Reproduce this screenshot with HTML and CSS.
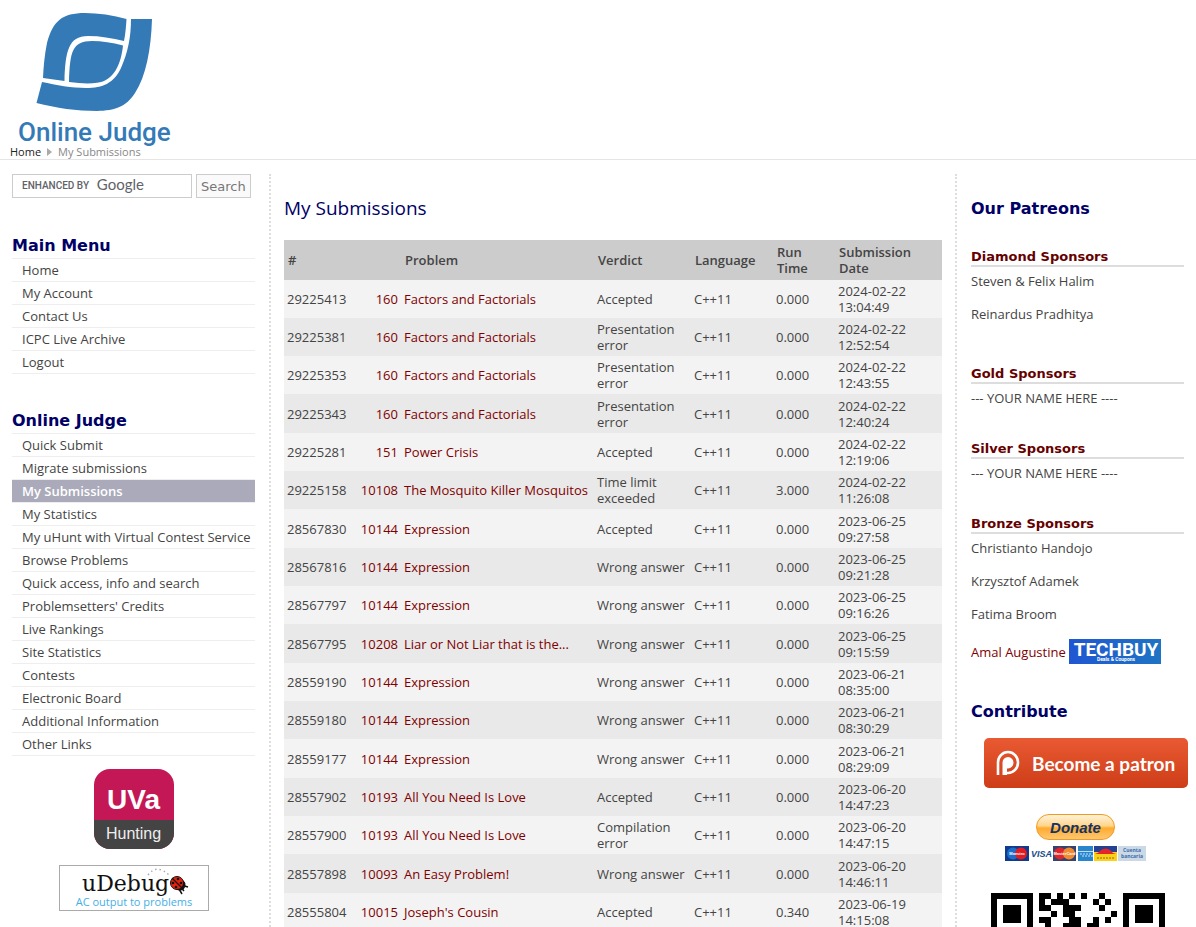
FILE: index.html
```
<!DOCTYPE html>
<html lang="en">
<head>
<meta charset="utf-8">
<title>Online Judge - My Submissions</title>
<link rel="stylesheet" href="styles.css">
</head>
<body>
<header class="header">
  <a class="logo" href="#" aria-label="Online Judge">
    <svg width="180" height="145" viewBox="0 0 180 145" fill="#337ab7">
      <path d="M126.500 19C113 15 98 13 85 13C62 13 53 21 47 43C44.500 55 43.500 67 43 78L64.500 81C65.500 52 68 36 88 36C100 36 112 38 124 41C125.500 34 126 26 126.500 19Z"/>
      <path d="M123 45.500C112 42.500 102 41 92 41C72 41 70 52 69 82C80 83.500 90 83.800 97 82.800C114 81 121 64 123 45.500Z"/>
      <path d="M131 19H152C151 50 146 76 135 93C126 107 115 110.500 97 111C77 111 56 108 36.500 103L42 82C56 85 72 88 86 88C103 88 114 83 121 68C128 52 131 37 131 19Z"/>
      <text class="logo-text" x="18" y="141">Online Judge</text>
    </svg>
  </a>
  <nav class="crumbs"><a href="#">Home</a><svg width="5" height="8" viewBox="0 0 5 8"><path d="M0 0L5 4L0 8Z" fill="#aaa"/></svg><span>My Submissions</span></nav>
</header>

<div class="page">
  <aside class="left">
    <form class="search">
      <div class="search-box">
        <input type="text" aria-label="Search">
        <span class="brand"><small>ENHANCED BY</small> Google</span>
      </div>
      <button type="button">Search</button>
    </form>
    <h2>Main Menu</h2>
    <ul class="menu">
      <li><a href="#">Home</a></li>
      <li><a href="#">My Account</a></li>
      <li><a href="#">Contact Us</a></li>
      <li><a href="#">ICPC Live Archive</a></li>
      <li><a href="#">Logout</a></li>
    </ul>
    <h2>Online Judge</h2>
    <ul class="menu">
      <li><a href="#">Quick Submit</a></li>
      <li><a href="#">Migrate submissions</a></li>
      <li><a class="active" href="#">My Submissions</a></li>
      <li><a href="#">My Statistics</a></li>
      <li><a href="#">My uHunt with Virtual Contest Service</a></li>
      <li><a href="#">Browse Problems</a></li>
      <li><a href="#">Quick access, info and search</a></li>
      <li><a href="#">Problemsetters' Credits</a></li>
      <li><a href="#">Live Rankings</a></li>
      <li><a href="#">Site Statistics</a></li>
      <li><a href="#">Contests</a></li>
      <li><a href="#">Electronic Board</a></li>
      <li><a href="#">Additional Information</a></li>
      <li><a href="#">Other Links</a></li>
    </ul>
    <div class="badges">
      <a class="uva" href="#"><b>UVa</b><span>Hunting</span></a>
      <a class="udebug" href="#" aria-label="uDebug, AC output to problems">
        <svg width="148" height="44" viewBox="0 0 148 44">
          <path d="M88 9Q97 -3 110 10" fill="none" stroke="#aaa" stroke-width="1.500" stroke-dasharray="1.500 3"/>
          <text class="udebug-name" x="22" y="25">uDebug</text>
          <path d="M114 13L124 25M125 17L121 19L128 21M119 23L122 28" stroke="#111" stroke-width="1.500" fill="none"/>
          <circle cx="120" cy="19" r="5.500" fill="#111"/>
          <circle cx="117" cy="17" r="6.500" fill="#e8200c" stroke="#111"/>
          <path d="M112 12L123 23" stroke="#111" stroke-width="1.200"/>
          <g fill="#111"><circle cx="118" cy="13" r="1.300"/><circle cx="121" cy="17" r="1.300"/><circle cx="113" cy="17" r="1.300"/><circle cx="116" cy="21" r="1.300"/></g>
          <text class="udebug-note" x="74" y="40" text-anchor="middle">AC output to problems</text>
        </svg>
      </a>
    </div>
  </aside>

  <main class="main">
    <h1>My Submissions</h1>
    <table>
      <colgroup><col class="c-id"><col class="c-num"><col class="c-title"><col class="c-verdict"><col class="c-lang"><col class="c-time"><col class="c-date"></colgroup>
      <thead><tr><th>#</th><th></th><th>Problem</th><th>Verdict</th><th>Language</th><th>Run Time</th><th>Submission Date</th></tr></thead>
      <tbody>
        <tr><td>29225413</td><td><a href="#">160</a></td><td><a href="#">Factors and Factorials</a></td><td>Accepted</td><td>C++11</td><td>0.000</td><td>2024-02-22 13:04:49</td></tr>
        <tr><td>29225381</td><td><a href="#">160</a></td><td><a href="#">Factors and Factorials</a></td><td>Presentation error</td><td>C++11</td><td>0.000</td><td>2024-02-22 12:52:54</td></tr>
        <tr><td>29225353</td><td><a href="#">160</a></td><td><a href="#">Factors and Factorials</a></td><td>Presentation error</td><td>C++11</td><td>0.000</td><td>2024-02-22 12:43:55</td></tr>
        <tr><td>29225343</td><td><a href="#">160</a></td><td><a href="#">Factors and Factorials</a></td><td>Presentation error</td><td>C++11</td><td>0.000</td><td>2024-02-22 12:40:24</td></tr>
        <tr><td>29225281</td><td><a href="#">151</a></td><td><a href="#">Power Crisis</a></td><td>Accepted</td><td>C++11</td><td>0.000</td><td>2024-02-22 12:19:06</td></tr>
        <tr><td>29225158</td><td><a href="#">10108</a></td><td><a href="#">The Mosquito Killer Mosquitos</a></td><td>Time limit exceeded</td><td>C++11</td><td>3.000</td><td>2024-02-22 11:26:08</td></tr>
        <tr><td>28567830</td><td><a href="#">10144</a></td><td><a href="#">Expression</a></td><td>Accepted</td><td>C++11</td><td>0.000</td><td>2023-06-25 09:27:58</td></tr>
        <tr><td>28567816</td><td><a href="#">10144</a></td><td><a href="#">Expression</a></td><td>Wrong answer</td><td>C++11</td><td>0.000</td><td>2023-06-25 09:21:28</td></tr>
        <tr><td>28567797</td><td><a href="#">10144</a></td><td><a href="#">Expression</a></td><td>Wrong answer</td><td>C++11</td><td>0.000</td><td>2023-06-25 09:16:26</td></tr>
        <tr><td>28567795</td><td><a href="#">10208</a></td><td><a href="#">Liar or Not Liar that is the...</a></td><td>Wrong answer</td><td>C++11</td><td>0.000</td><td>2023-06-25 09:15:59</td></tr>
        <tr><td>28559190</td><td><a href="#">10144</a></td><td><a href="#">Expression</a></td><td>Wrong answer</td><td>C++11</td><td>0.000</td><td>2023-06-21 08:35:00</td></tr>
        <tr><td>28559180</td><td><a href="#">10144</a></td><td><a href="#">Expression</a></td><td>Wrong answer</td><td>C++11</td><td>0.000</td><td>2023-06-21 08:30:29</td></tr>
        <tr><td>28559177</td><td><a href="#">10144</a></td><td><a href="#">Expression</a></td><td>Wrong answer</td><td>C++11</td><td>0.000</td><td>2023-06-21 08:29:09</td></tr>
        <tr><td>28557902</td><td><a href="#">10193</a></td><td><a href="#">All You Need Is Love</a></td><td>Accepted</td><td>C++11</td><td>0.000</td><td>2023-06-20 14:47:23</td></tr>
        <tr><td>28557900</td><td><a href="#">10193</a></td><td><a href="#">All You Need Is Love</a></td><td>Compilation error</td><td>C++11</td><td>0.000</td><td>2023-06-20 14:47:15</td></tr>
        <tr><td>28557898</td><td><a href="#">10093</a></td><td><a href="#">An Easy Problem!</a></td><td>Wrong answer</td><td>C++11</td><td>0.000</td><td>2023-06-20 14:46:11</td></tr>
        <tr><td>28555804</td><td><a href="#">10015</a></td><td><a href="#">Joseph's Cousin</a></td><td>Accepted</td><td>C++11</td><td>0.340</td><td>2023-06-19 14:15:08</td></tr>
      </tbody>
    </table>
  </main>

  <aside class="right">
    <h2>Our Patreons</h2>
    <section class="tier diamond"><h3>Diamond Sponsors</h3><p>Steven &amp; Felix Halim</p><p>Reinardus Pradhitya</p></section>
    <section class="tier"><h3>Gold Sponsors</h3><p>--- YOUR NAME HERE ----</p></section>
    <section class="tier"><h3>Silver Sponsors</h3><p>--- YOUR NAME HERE ----</p></section>
    <section class="tier"><h3>Bronze Sponsors</h3><p>Christianto Handojo</p><p>Krzysztof Adamek</p><p>Fatima Broom</p>
      <p class="backer"><a href="#">Amal Augustine</a>
        <svg width="92" height="25" viewBox="0 0 92 25">
          <defs><linearGradient id="tb"><stop offset="0" stop-color="#2056d2"/><stop offset="1" stop-color="#1e74c4"/></linearGradient></defs>
          <rect width="92" height="25" fill="url(#tb)"/>
          <text class="techbuy" x="47" y="17" text-anchor="middle">TECHBUY</text>
          <text class="techbuy-note" x="47" y="22" text-anchor="middle">Deals &amp; Coupons</text>
        </svg>
      </p>
    </section>
    <h2 class="contribute">Contribute</h2>
    <a class="patron" href="#">
      <svg width="24" height="26" viewBox="0 0 24 26"><path d="M2 25V12.500A10 10.500 0 1 1 12 23H8.500" fill="none" stroke="#fff" stroke-width="2.600"/><path d="M6.500 25V12.500A5.500 5.800 0 1 1 12 18.500H11V25Z" fill="#fff"/></svg>
      <span>Become a patron</span>
    </a>
    <div class="pay">
      <button class="donate" type="button">Donate</button>
      <svg width="141" height="15" viewBox="0 0 141 15" role="img" aria-label="Accepted cards">
        <rect width="24" height="15" fill="#123a8c"/><circle cx="8" cy="7.500" r="6" fill="#1c6ecb"/><circle cx="16" cy="7.500" r="6" fill="#e11b22"/><text class="card" x="12" y="9" text-anchor="middle">Maestro</text>
        <text class="visa" x="26" y="11">VISA</text>
        <rect x="48" width="23" height="15" fill="#35446f"/><circle cx="55" cy="7.500" r="6" fill="#e3242a"/><circle cx="64" cy="7.500" r="6" fill="#f28b30"/><text class="card" x="59.500" y="9" text-anchor="middle">MasterCard</text>
        <rect x="73" width="15" height="15" fill="#2a86cc"/><path d="M73 5.500H88" stroke="#fff" opacity=".7"/><path d="M75 8H87M77 10H88" stroke="#c5e2f5" stroke-width="1.200" stroke-dasharray="2 1"/>
        <rect x="89" width="23" height="15" fill="#fbd116"/><rect x="89" width="23" height="6" fill="#25418f"/><path d="M90 8Q95 6 96 4Q101 1 105 4Q107 7 111 8Z" fill="#e4262c"/><path d="M92 12H109" stroke="#8a6a2a" stroke-dasharray="2 1"/>
        <rect x="113" width="28" height="15" fill="#cbd9e6"/><text class="bank" x="127" y="6" text-anchor="middle">Cuenta</text><text class="bank" x="127" y="12" text-anchor="middle">bancaria</text>
      </svg>
    </div>
    <svg class="qr" width="174" height="36" viewBox="0 0 29 6" shape-rendering="crispEdges" role="img" aria-label="QR code">
      <path d="M0 0H7V6H6V1H1V6H0ZM2 2H5V5H2ZM22 0H29V6H28V1H23V6H22ZM24 2H27V5H24Z"/>
      <path d="M8 0h2v1h-2zM11 0h1v1h-1zM13 0h1v1h-1zM15 0h1v1h-1zM18 0h1v1h-1zM8 1h1v1h-1zM10 1h3v1h-3zM17 1h1v1h-1zM19 1h1v1h-1zM8 2h2v1h-2zM12 2h3v1h-3zM18 2h1v1h-1zM10 3h1v1h-1zM12 3h2v1h-2zM20 3h1v1h-1zM8 4h2v1h-2zM13 4h2v1h-2zM17 4h1v1h-1zM19 4h1v1h-1zM9 5h1v1h-1zM12 5h3v1h-3zM16 5h2v1h-2z"/>
    </svg>
  </aside>
</div>
</body>
</html>
```
FILE: styles.css
```
* { box-sizing: border-box; }
body { margin: 0; background: #fff; color: #444; font: 13px/16px "Open Sans", sans-serif; }
h1, h2, h3, p, ul { margin: 0; padding: 0; font-weight: normal; }
a { color: #800000; text-decoration: none; }
svg { display: block; }

.header { border-bottom: 1px solid #e5e5e5; }
.logo { display: block; width: 180px; }
.logo svg { overflow: visible; }
.logo-text { font: 500 26px Roboto, sans-serif; }
.crumbs { display: flex; align-items: center; gap: 6px; padding-left: 10px; font-size: 11px; line-height: 14px; color: #888; }
.crumbs a { color: #222; }

.page { display: grid; grid-template-columns: 271px 1fr 241px; padding-top: 14px; }
.left { padding: 0 14px 0 12px; border-right: 2px dotted #ddd; }
.main { padding: 20px 13px 0; }
.right { padding: 22px 12px 0 14px; border-left: 2px dotted #ddd; }

h2 { color: #006; font: bold 16px/25px "DejaVu Sans", sans-serif; }
.left h2 { margin-top: 34px; }

.search { display: flex; gap: 4px; height: 25px; align-items: flex-start; }
.search-box { position: relative; width: 180px; }
.search input { display: block; width: 100%; height: 24px; border: 1px solid #ccc; }
.brand { position: absolute; left: 10px; top: 1px; color: #5f6368; font: 15px/18px Lato, sans-serif; pointer-events: none; }
.brand small { margin-right: 4px; font: 500 10px Roboto, sans-serif; vertical-align: 1px; }
.search button { height: 24px; padding: 0 4px; border: 1px solid #ccc; background: #fafafa; color: #777; font: 13px "DejaVu Sans", sans-serif; }

.menu { list-style: none; border-top: 1px solid #eee; }
.menu li { border-bottom: 1px solid #eee; }
.menu a { display: block; padding: 0 10px; color: #444; line-height: 22px; white-space: nowrap; }
.menu .active { background: #aab; color: #fff; font-weight: 600; }

.badges { display: flex; flex-direction: column; align-items: center; gap: 16px; padding-top: 13px; }
.uva { display: flex; flex-direction: column; width: 80px; height: 80px; border-radius: 16px; overflow: hidden; background: #c41856; color: #fff; font-family: "Liberation Sans", sans-serif; text-align: center; }
.uva b { padding-top: 10px; font-size: 28px; line-height: 41px; }
.uva span { flex: 1; background: #444; color: #eee; font-size: 16px; line-height: 27px; }
.udebug { border: 1px solid #aaa; }
.udebug-name { font: 22px "DejaVu Serif", serif; fill: #111; }
.udebug-note { font: 11px "Open Sans", sans-serif; fill: #45b0e6; }

h1 { margin-bottom: 18px; color: #006; font-size: 19px; line-height: 28px; }
table { width: 100%; table-layout: fixed; border-collapse: collapse; }
.c-id { width: 71px; }
.c-num { width: 46px; }
.c-title { width: 193px; }
.c-verdict { width: 97px; }
.c-lang { width: 82px; }
.c-time { width: 62px; }
th { padding: 4px 4px; background: #ccc; font-weight: 600; text-align: left; }
td { height: 38px; padding: 3px 3px; }
th:last-child, td:last-child { padding-right: 30px; }
td:nth-child(2) { text-align: right; }
td:nth-child(4) { padding-right: 0; }
tbody tr { background: #f3f3f3; }
tbody tr:nth-child(even) { background: #e9e9e9; }
tbody tr:nth-child(3n+4) td { height: 39px; }

.right h2 { margin-bottom: 28px; }
.tier { margin-bottom: 35px; }
.diamond { margin-bottom: 44px; }
h3 { margin-bottom: 6px; border-bottom: 2px solid #ddd; color: #600; font: bold 13px/16px "DejaVu Sans", sans-serif; }
.tier p + p { margin-top: 17px; }
.backer { display: flex; align-items: center; gap: 3px; white-space: nowrap; }
.techbuy { font: bold 19px Roboto, sans-serif; fill: #fff; }
.techbuy-note { font: bold 5px Roboto, sans-serif; fill: #fff; }
.right .contribute { margin-bottom: 14px; }
.patron { display: flex; align-items: center; gap: 12px; width: 204px; height: 50px; margin-left: 13px; padding-left: 12px; border-radius: 5px; background: linear-gradient(#e95a33, #cd3d17); color: #fff; font: bold 19px Lato, sans-serif; white-space: nowrap; }
.pay { display: flex; flex-direction: column; align-items: center; gap: 6px; margin-top: 26px; padding-right: 4px; }
.donate { width: 79px; height: 26px; padding: 0; border: 1px solid #f29a1f; border-radius: 13px; background: linear-gradient(#fff3d8, #ffd58a 45%, #ffab2e 55%, #ffc774); color: #113366; font: italic bold 15px "Liberation Sans", sans-serif; }
.card { font: bold 4px "Liberation Sans", sans-serif; fill: #fff; }
.visa { font: italic bold 9px "Liberation Sans", sans-serif; fill: #1a4a8a; }
.bank { font: bold 5px "Open Sans", sans-serif; fill: #3a6ca8; }
.qr { margin: 32px auto 0; }
```
